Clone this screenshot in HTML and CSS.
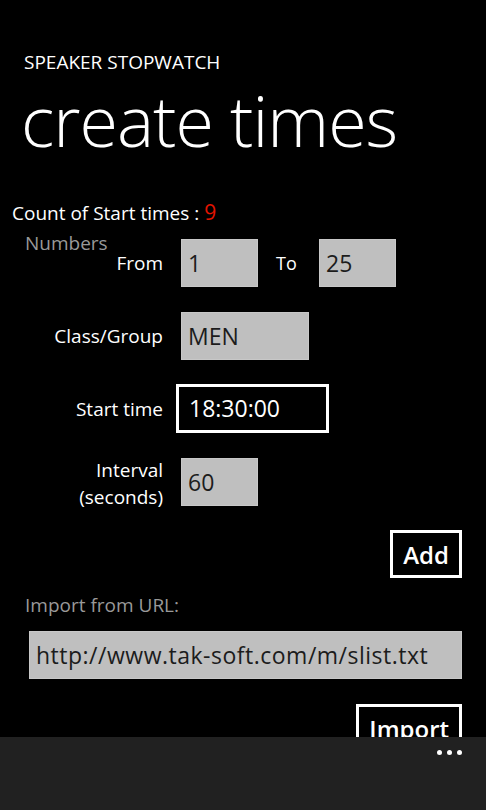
FILE: index.html
```html
<!DOCTYPE html>
<html lang="en">
<head>
  <meta charset="UTF-8">
  <title>Speaker Stopwatch - create times</title>
  <link rel="stylesheet" href="styles.css">
</head>
<body>

  <div class="screen">
    <div class="header">
      <div class="app-title">SPEAKER STOPWATCH</div>
      <h1 class="page-title">create times</h1>
    </div>

    <div class="count">Count of Start times : <span class="count-num">9</span></div>

    <div class="hint">Numbers</div>

    <div class="form">
      <div class="row">
        <div class="label">From</div>
        <div class="field-line">
          <div class="box small">1</div>
          <div class="to">To</div>
          <div class="box small">25</div>
        </div>
      </div>

      <div class="row">
        <div class="label">Class/Group</div>
        <div class="box medium">MEN</div>
      </div>

      <div class="row">
        <div class="label">Start time</div>
        <div class="box focused">18:30:00</div>
      </div>

      <div class="row">
        <div class="label two-line">Interval<br>(seconds)</div>
        <div class="box small">60</div>
      </div>
    </div>

    <div class="btn-row">
      <button class="btn">Add</button>
    </div>

    <div class="hint import-hint">Import from URL:</div>
    <div class="box url">http://www.tak-soft.com/m/slist.txt</div>

    <div class="btn-row">
      <button class="btn">Import</button>
    </div>
  </div>

  <div class="appbar">
    <span class="dot"></span>
    <span class="dot"></span>
    <span class="dot"></span>
  </div>

</body>
</html>
```

FILE: styles.css
```css
body {
  margin: 0;
  background: #000;
  color: #fff;
  font-family: 'Open Sans', 'Segoe UI', sans-serif;
}

.screen {
  height: 737px;
  overflow: hidden;
}

.header {
  padding: 50px 0 0 24px;
}

.app-title {
  font-size: 19px;
  line-height: 24px;
}

.page-title {
  margin: 4px 0 0 -3px;
  font-size: 70px;
  font-weight: 300;
  line-height: 84px;
  letter-spacing: -1px;
}

.count {
  margin: 37px 0 0 12px;
  font-size: 19px;
  line-height: 26px;
}

.count-num {
  color: #e51400;
  font-size: 21px;
}

.hint {
  margin: 6px 0 0 25px;
  font-size: 19px;
  line-height: 22px;
  color: #999;
}

.form {
  margin-top: -16px;
}

.row {
  display: flex;
  align-items: center;
  height: 49px;
  margin-bottom: 24px;
}

.label {
  width: 176px;
  padding-right: 13px;
  box-sizing: border-box;
  text-align: right;
  font-size: 19px;
}

.two-line {
  line-height: 27px;
  padding-top: 4px;
}

.field-line {
  display: flex;
  align-items: center;
}

.to {
  width: 56px;
  padding-left: 18px;
  box-sizing: border-box;
  font-size: 18px;
}

.box {
  box-sizing: border-box;
  height: 48px;
  background: #bfbfbf;
  color: #1c1c1c;
  font-size: 23px;
  line-height: 46px;
  padding-left: 6px;
  border: 1px solid #c8c8c8;
}

.small {
  width: 77px;
  margin-left: 5px;
}

.medium {
  width: 128px;
  margin-left: 5px;
}

.focused {
  width: 153px;
  height: 49px;
  background: #000;
  color: #fff;
  border: 3px solid #fff;
  line-height: 43px;
  padding-left: 10px;
}

.btn-row {
  display: flex;
  justify-content: flex-end;
  padding-right: 24px;
}

.btn {
  height: 48px;
  padding: 0 10px;
  background: #000;
  color: #fff;
  border: 3px solid #fff;
  font-family: inherit;
  font-size: 24px;
  font-weight: 600;
}

.import-hint {
  margin-top: 16px;
}

.url {
  margin: 15px 24px 0 29px;
  padding-left: 6px;
  letter-spacing: 0.5px;
}

.url + .btn-row {
  margin-top: 25px;
}

.appbar {
  height: 73px;
  background: #212121;
  display: flex;
  justify-content: flex-end;
  gap: 5px;
  padding: 13px 24px 0 0;
  box-sizing: border-box;
}

.dot {
  width: 5px;
  height: 5px;
  border-radius: 50%;
  background: #fff;
}
```
